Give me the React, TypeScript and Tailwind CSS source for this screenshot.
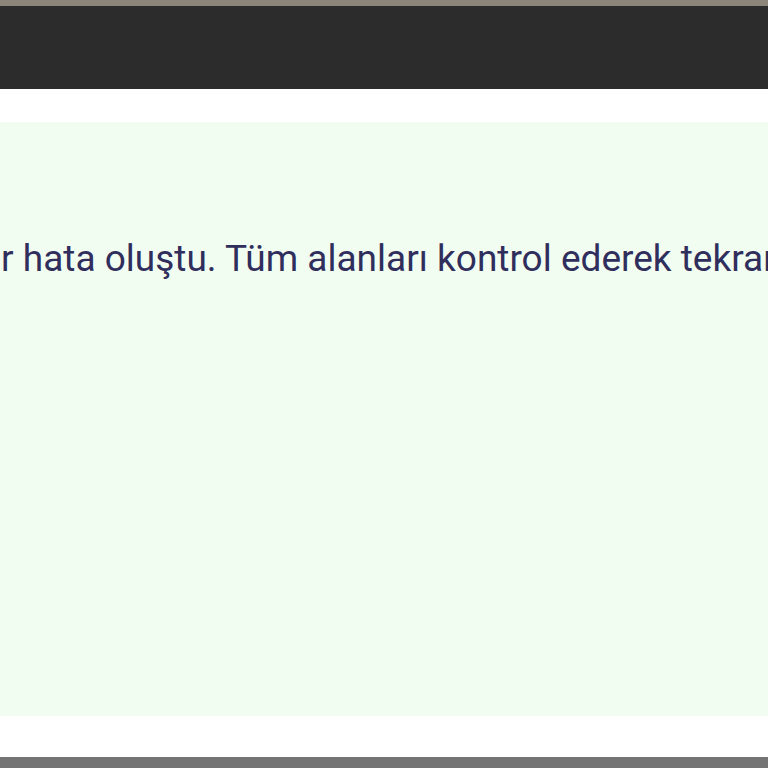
import React from "react";

export default function App() {
  return (
    <div className="w-[768px] h-[768px] flex flex-col overflow-hidden bg-white" style={{ fontFamily: "Roboto, 'Liberation Sans', sans-serif" }}>
      <div className="h-[6px] bg-[#8b857a] shrink-0" />
      <div className="h-[83px] bg-[#2c2c2c] shrink-0" />
      <div className="h-[33px] bg-white shrink-0" />
      <div className="h-[594px] bg-[#f2fdf1] shrink-0 overflow-hidden pt-[115px]">
        <div className="whitespace-nowrap ml-[-31px] text-[37px] leading-[44px] text-[#302e5c]">
          Bir hata oluştu. Tüm alanları kontrol ederek tekrar deneyin.
        </div>
      </div>
      <div className="h-[41px] bg-white shrink-0" />
      <div className="flex-1 bg-[#747474]" />
    </div>
  );
}
